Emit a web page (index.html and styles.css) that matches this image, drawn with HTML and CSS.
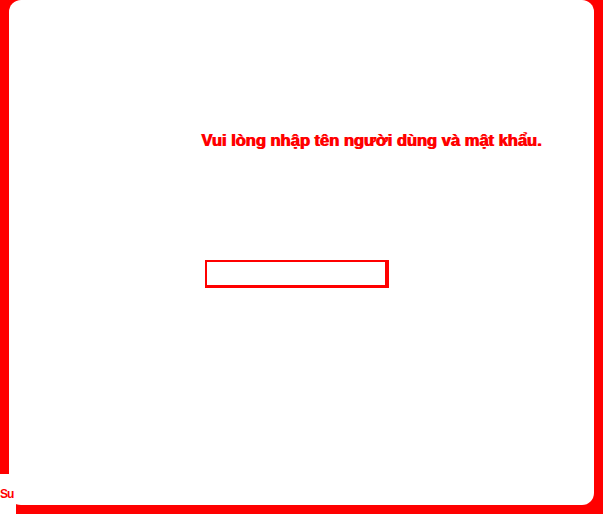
FILE: index.html
```html
<!DOCTYPE html>
<html lang="vi">
<head>
<meta charset="utf-8">
<title>Đăng nhập</title>
<link rel="stylesheet" href="styles.css">
</head>
<body>
<main class="panel">
  <p class="message">Vui lòng nhập tên người dùng và mật khẩu.</p>
  <div class="field"></div>
</main>
<div class="corner-note"><span>Su</span></div>
</body>
</html>
```

FILE: styles.css
```css
html, body {
  margin: 0;
  padding: 0;
  height: 100%;
}
body {
  background: #ff0000;
  overflow: hidden;
  font-family: "Liberation Sans", Arial, sans-serif;
  position: relative;
}
.panel {
  box-sizing: border-box;
  margin: 0 9px;
  height: 505px;
  background: #ffffff;
  border-radius: 12px;
  padding: 130px 0 0 192px;
  display: flex;
  flex-direction: column;
  align-items: flex-start;
}
.message {
  margin: 0;
  color: #ff0000;
  font-size: 16.5px;
  font-weight: bold;
  line-height: 21px;
  letter-spacing: 0;
  text-shadow: 1px 0 0 #ff0000;
}
.field {
  margin-top: 109px;
  margin-left: 4px;
  width: 178px;
  height: 23px;
  border: 2px solid #ff0000;
  border-right-width: 4px;
  border-bottom-width: 3px;
}
.corner-note {
  position: absolute;
  left: 0;
  top: 474px;
  width: 16px;
  height: 40px;
  background: #ffffff;
  overflow: hidden;
}
.corner-note span {
  display: block;
  margin-top: 13px;
  color: #ff0000;
  font-size: 12px;
  font-weight: bold;
  line-height: 14px;
  white-space: nowrap;
  letter-spacing: -1px;
}
```
